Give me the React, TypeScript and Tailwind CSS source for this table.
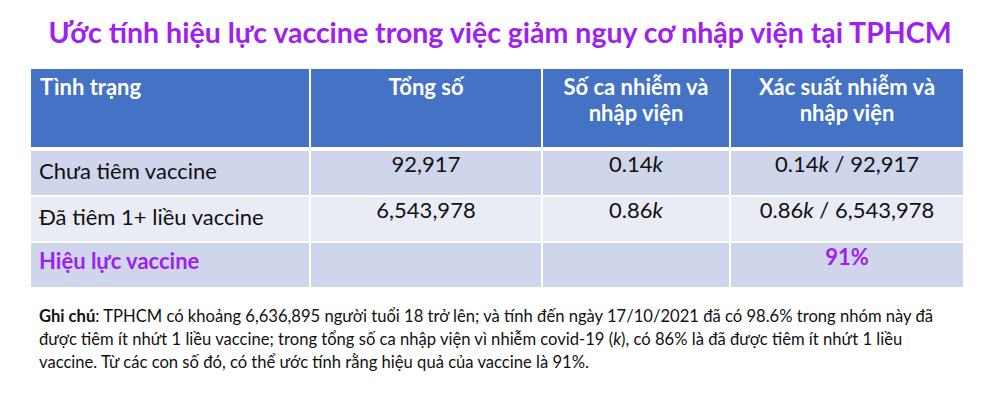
const rows = [
  { label: "Chưa tiêm vaccine", total: "92,917", cases: "0.14", prob: "92,917", bg: "bg-[#cfd5ea]" },
  { label: "Đã tiêm 1+ liều vaccine", total: "6,543,978", cases: "0.86", prob: "6,543,978", bg: "bg-[#e9ebf5]" },
];

const K = ({ v }: { v: string }) => (
  <>
    {v}
    <i>k</i>
  </>
);

export default function App() {
  return (
    <div className="w-[1000px] h-[417px] bg-white font-['Lato',sans-serif] text-[#111]">
      <h1 className="pt-[15px] text-center text-[28.5px] leading-[34px] font-bold text-[#a020f0]">
        Ước tính hiệu lực vaccine trong việc giảm nguy cơ nhập viện tại TPHCM
      </h1>

      <div className="ml-[31px] mt-[20px] w-[932px] grid grid-cols-[278px_230px_186px_232px] gap-x-[2px] text-[22px] leading-[26px]">
        {/* header */}
        <div className="h-[78px] bg-[#4472c4] text-white font-bold px-[9px] pt-[5px]">Tình trạng</div>
        <div className="h-[78px] bg-[#4472c4] text-white font-bold text-center pt-[5px]">Tổng số</div>
        <div className="h-[78px] bg-[#4472c4] text-white font-bold text-center pt-[5px]">
          Số ca nhiễm và
          <br />
          nhập viện
        </div>
        <div className="h-[78px] bg-[#4472c4] text-white font-bold text-center pt-[5px]">
          Xác suất nhiễm và
          <br />
          nhập viện
        </div>

        {rows.map((r, i) => (
          <div key={r.label} className="contents">
            <div className={`${r.bg} h-[44px] px-[8px] pt-[7px] ${i === 0 ? "mt-[4px]" : "mt-[2px]"}`}>{r.label}</div>
            <div className={`${r.bg} h-[44px] text-center ${i === 0 ? "mt-[4px]" : "mt-[2px]"}`}>{r.total}</div>
            <div className={`${r.bg} h-[44px] text-center ${i === 0 ? "mt-[4px]" : "mt-[2px]"}`}>
              <K v={r.cases} />
            </div>
            <div className={`${r.bg} h-[44px] text-center ${i === 0 ? "mt-[4px]" : "mt-[2px]"}`}>
              <K v={r.cases} /> / {r.prob}
            </div>
          </div>
        ))}

        <div className="bg-[#cfd5ea] h-[44px] mt-[2px] px-[8px] pt-[5px] font-bold text-[#a020f0]">Hiệu lực vaccine</div>
        <div className="bg-[#cfd5ea] h-[44px] mt-[2px]" />
        <div className="bg-[#cfd5ea] h-[44px] mt-[2px]" />
        <div className="bg-[#cfd5ea] h-[44px] mt-[2px] pt-[1px] text-center font-bold text-[#a020f0]">91%</div>
      </div>

      <p className="ml-[39px] mt-[18px] w-[940px] whitespace-nowrap text-[16.6px] leading-[23px]">
        <b>Ghi chú</b>: TPHCM có khoảng 6,636,895 người tuổi 18 trở lên; và tính đến ngày 17/10/2021 đã có 98.6% trong nhóm này đã
        <br />
        được tiêm ít nhứt 1 liều vaccine; trong tổng số ca nhập viện vì nhiễm covid-19 (<i>k</i>), có 86% là đã được tiêm ít nhứt 1 liều
        <br />
        vaccine. Từ các con số đó, có thể ước tính rằng hiệu quả của vaccine là 91%.
      </p>
    </div>
  );
}
